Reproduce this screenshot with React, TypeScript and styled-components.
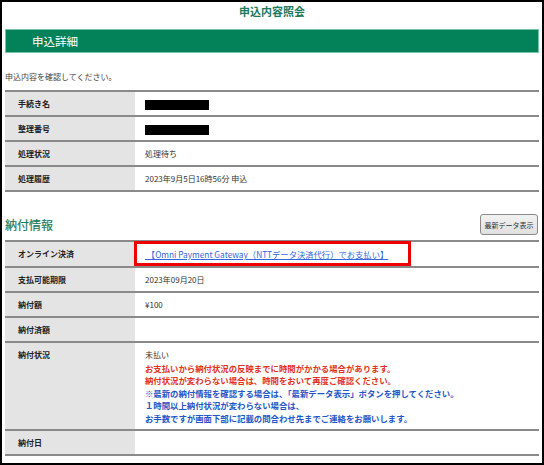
import React from "react";
import styled, { createGlobalStyle } from "styled-components";

const GlobalStyle = createGlobalStyle`
  html, body { margin: 0; padding: 0; background: #fff; }
  body { font-family: "Noto Sans CJK JP", "Noto Sans", sans-serif; color: #333; }
  * { box-sizing: border-box; }
`;

const Page = styled.div`
  width: 544px;
  height: 465px;
  border: 2px solid #000;
  padding: 0 3px;
  overflow: hidden;
`;

const Title = styled.h1`
  margin: 0;
  padding-top: 1px;
  text-align: center;
  font-size: 11px;
  line-height: 16px;
  font-weight: bold;
  color: #1b7a5c;
`;

const SectionBar = styled.div`
  margin-top: 10px;
  height: 24px;
  background: #038259;
  border: 1px solid #78c5a8;
  color: #fff;
  font-size: 11.5px;
  line-height: 22px;
  padding-left: 26px;
`;

const Intro = styled.p`
  margin: 18px 0 7px;
  font-size: 8px;
  line-height: 12px;
  color: #444;
`;

const Table = styled.div`
  border-top: 2px solid #8a8a8a;
`;

const Row = styled.div`
  display: grid;
  grid-template-columns: 130px 1fr;
  border-bottom: 2px solid #8a8a8a;
`;

const Label = styled.div`
  background: #e4e4e4;
  padding: 6px 13px 5px;
  font-size: 8px;
  line-height: 12px;
  font-weight: bold;
  color: #222;
`;

const Value = styled.div<{ $boxed?: boolean }>`
  position: relative;
  padding: 6px 10px 5px;
  font-size: 8px;
  line-height: 12px;
  color: #333;
  ${(p) =>
    p.$boxed &&
    `
    &::after {
      content: "";
      position: absolute;
      left: -1px;
      top: -1px;
      bottom: 0;
      width: 271px;
      border: 3px solid #ee0000;
      pointer-events: none;
    }
  `}
`;

const Redacted = styled.span`
  display: inline-block;
  width: 64px;
  height: 10px;
  background: #000;
  vertical-align: middle;
`;

const HeadingRow = styled.div`
  display: flex;
  align-items: center;
  justify-content: space-between;
  margin: 22px 0 5px;
  padding-right: 1px;
`;

const Heading = styled.h2`
  margin: 0;
  font-size: 12px;
  line-height: 16px;
  font-weight: normal;
  color: #1b7a5c;
  -webkit-text-stroke: 0.2px #1b7a5c;
`;

const RefreshButton = styled.button`
  width: 58px;
  height: 21px;
  padding: 0;
  border: 1px solid #8a8a8a;
  border-radius: 3px;
  background: linear-gradient(#f2f2f2, #e0e0e0);
  font-family: inherit;
  font-size: 7px;
  color: #333;
`;

const PayLink = styled.a`
  color: #3366dd;
  text-decoration: underline;
  font-size: 8.3px;
`;

const Note = styled.div<{ $tone: "plain" | "red" | "blue" }>`
  font-size: ${(p) => (p.$tone === "plain" ? "8px" : "8.4px")};
  line-height: 12.5px;
  font-weight: ${(p) => (p.$tone === "plain" ? "normal" : "bold")};
  color: ${(p) =>
    p.$tone === "red" ? "#e2321e" : p.$tone === "blue" ? "#2456c6" : "#333"};
  white-space: nowrap;
`;

const detailRows: { label: string; value: React.ReactNode }[] = [
  { label: "手続き名", value: <Redacted /> },
  { label: "整理番号", value: <Redacted /> },
  { label: "処理状況", value: "処理待ち" },
  { label: "処理履歴", value: "2023年9月5日16時56分 申込" },
];

export default function App() {
  return (
    <>
      <GlobalStyle />
      <Page>
        <Title>申込内容照会</Title>
        <SectionBar>申込詳細</SectionBar>
        <Intro>申込内容を確認してください。</Intro>
        <Table>
          {detailRows.map((r) => (
            <Row key={r.label}>
              <Label>{r.label}</Label>
              <Value>{r.value}</Value>
            </Row>
          ))}
        </Table>

        <HeadingRow>
          <Heading>納付情報</Heading>
          <RefreshButton type="button">最新データ表示</RefreshButton>
        </HeadingRow>
        <Table>
          <Row>
            <Label>オンライン決済</Label>
            <Value $boxed>
              <PayLink href="#">
                {"\u00a0【Omni Payment Gateway（NTTデータ決済代行）でお支払い】"}
              </PayLink>
            </Value>
          </Row>
          <Row>
            <Label>支払可能期限</Label>
            <Value>2023年09月20日</Value>
          </Row>
          <Row>
            <Label>納付額</Label>
            <Value>¥100</Value>
          </Row>
          <Row>
            <Label>納付済額</Label>
            <Value />
          </Row>
          <Row>
            <Label>納付状況</Label>
            <Value>
              <Note $tone="plain">未払い</Note>
              <Note $tone="red">お支払いから納付状況の反映までに時間がかかる場合があります。</Note>
              <Note $tone="red">納付状況が変わらない場合は、時間をおいて再度ご確認ください。</Note>
              <Note $tone="blue">※最新の納付情報を確認する場合は、「最新データ表示」ボタンを押してください。</Note>
              <Note $tone="blue">１時間以上納付状況が変わらない場合は、</Note>
              <Note $tone="blue">お手数ですが画面下部に記載の問合わせ先までご連絡をお願いします。</Note>
            </Value>
          </Row>
          <Row>
            <Label>納付日</Label>
            <Value />
          </Row>
        </Table>
      </Page>
    </>
  );
}
